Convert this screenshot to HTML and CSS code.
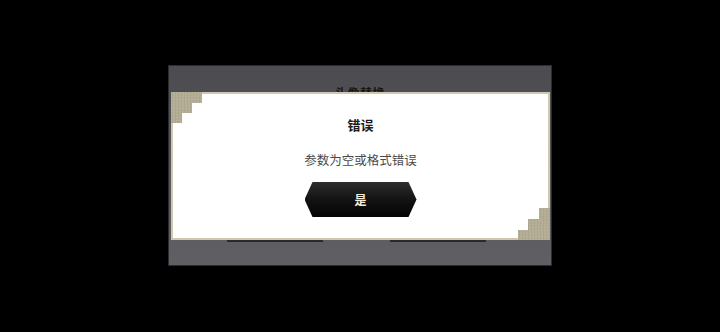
FILE: index.html
```html
<!DOCTYPE html>
<html lang="zh">
<head>
<meta charset="utf-8">
<link rel="stylesheet" href="styles.css">
</head>
<body>
<div class="screen">
  <div class="panel">
    <div class="panel-title">头像替换</div>
    <div class="panel-actions">
      <div class="panel-btn"></div>
      <div class="panel-btn"></div>
    </div>
    <div class="dialog">
      <div class="corner corner-tl"></div>
      <div class="corner corner-br"></div>
      <div class="dialog-title">错误</div>
      <div class="dialog-msg">参数为空或格式错误</div>
      <div class="dialog-btn">是</div>
    </div>
  </div>
</div>
</body>
</html>
```

FILE: styles.css
```css
html, body {
  margin: 0;
  padding: 0;
  background: #000;
}
body {
  font-family: "Noto Sans CJK SC", "Noto Sans", sans-serif;
}
.screen {
  width: 720px;
  height: 332px;
  display: flex;
  align-items: center;
  justify-content: center;
}
.panel {
  position: relative;
  box-sizing: border-box;
  width: 384px;
  height: 201px;
  margin-top: -1px;
  border: 1px solid #2c2c2e;
  background: linear-gradient(to bottom, #4b4b50 0%, #55555a 50%, #606064 100%);
  display: flex;
  flex-direction: column;
  align-items: center;
  padding-top: 20px;
}
.panel-title {
  font-size: 12px;
  line-height: 14px;
  font-weight: 700;
  color: #161616;
  letter-spacing: 0.5px;
}
.panel-actions {
  display: flex;
  gap: 67px;
  margin-top: 112px;
  margin-right: 8px;
}
.panel-btn {
  width: 96px;
  height: 30px;
  background: #2a2a28;
}
.dialog {
  position: absolute;
  left: 2px;
  top: 26px;
  box-sizing: border-box;
  width: 379px;
  height: 148px;
  background: #ffffff;
  border: 2px solid #cfc7ae;
  display: flex;
  flex-direction: column;
  align-items: center;
  padding-top: 23px;
}
.corner {
  position: absolute;
  width: 31px;
  height: 31px;
  background-color: #b3ac95;
  background-image: repeating-conic-gradient(#aea78f 0 25%, #b9b29c 0 50%);
  background-size: 3px 3px;
}
.corner-tl {
  left: -2px;
  top: -2px;
  clip-path: polygon(0 0, 100% 0, 100% 11px, 21px 11px, 21px 21px, 11px 21px, 11px 100%, 0 100%);
}
.corner-br {
  right: -2px;
  bottom: -2px;
  width: 32px;
  height: 32px;
  clip-path: polygon(100% 100%, 0 100%, 0 22px, 10px 22px, 10px 11px, 21px 11px, 21px 0, 100% 0);
}
.dialog-title {
  font-size: 13px;
  line-height: 16px;
  font-weight: 700;
  color: #1c1c1c;
}
.dialog-msg {
  margin-top: 19px;
  font-size: 12.5px;
  line-height: 16px;
  color: #4a4a4a;
}
.dialog-btn {
  margin-top: 14px;
  width: 112px;
  height: 35px;
  display: flex;
  align-items: center;
  justify-content: center;
  background: linear-gradient(to bottom, #2e2e2e 0%, #151515 45%, #030303 100%);
  clip-path: polygon(0 50%, 8px 0, calc(100% - 8px) 0, 100% 50%, calc(100% - 8px) 100%, 8px 100%);
  color: #f3ecd8;
  font-size: 12px;
  font-weight: 700;
}
```
